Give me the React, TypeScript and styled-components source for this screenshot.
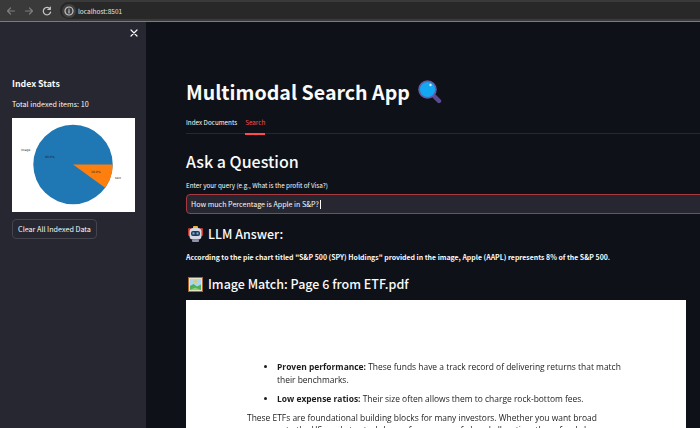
import React from "react";
import styled, { createGlobalStyle } from "styled-components";

const Global = createGlobalStyle`
  html, body { margin: 0; padding: 0; background: #0e1117; }
  * { box-sizing: border-box; }
`;
const Page = styled.div`
  width: 700px; height: 428px; overflow: hidden; display: flex; flex-direction: column;
  font-family: "Noto Sans CJK SC", "Noto Sans", sans-serif; color: #fafafa; background: #0e1117;
`;
const Chrome = styled.div`
  height: 22px; flex: none; display: flex; align-items: center; background: #3a3a3a;
  border-bottom: 1px solid #cf5a4c; padding-left: 6px; gap: 8px;
`;
const NavIcon = styled.svg<{ $dim?: boolean }>`
  width: 10px; height: 10px; flex: none; fill: none; stroke-width: 1.2; stroke-linecap: round; stroke-linejoin: round;
  stroke: ${p => (p.$dim ? "#7c7c7c" : "#c7c7c7")};
`;
const Omnibox = styled.div`
  flex: 1; height: 17px; background: #282828; border-radius: 9px 0 0 9px;
  display: flex; align-items: center; padding-left: 2px; gap: 2px; font-size: 6.5px; color: #e2e2e2;
`;
const SiteInfo = styled.span`
  width: 14px; height: 14px; border-radius: 50%; background: #3f3f3f; display: flex; align-items: center; justify-content: center; flex: none;
`;
const Body = styled.div`flex: 1; display: flex; min-height: 0;`;
const Sidebar = styled.aside`
  width: 146px; flex: none; background: #262730; padding: 5px 11px 0 12px; display: flex; flex-direction: column;
`;
const CloseRow = styled.div`display: flex; justify-content: flex-end; height: 50px; padding-top: 1px; margin-right: -4px;`;
const CloseIcon = styled(NavIcon)`stroke: #fafafa;`;
const SideTitle = styled.div`font-size: 8.8px; font-weight: 700; line-height: 14px; margin-bottom: 7px; white-space: nowrap;`;
const SideText = styled.div`font-size: 7.2px; line-height: 12px; margin-bottom: 8px; white-space: nowrap;`;
const Chart = styled.svg`width: 123px; height: 94px; display: block; background: #fff; flex: none;`;
const ClearButton = styled.button`
  margin-top: 7px; width: 85px; height: 20px; padding: 0; background: #262730; color: #fafafa;
  border: 1px solid #43444e; border-radius: 4px; font: 400 7.2px "Noto Sans CJK SC", sans-serif; white-space: nowrap;
`;
const Main = styled.main`
  flex: 1; min-width: 0; padding: 54px 0 0 40px; overflow: hidden; display: flex; flex-direction: column;
`;
const Title = styled.h1`
  margin: 0; font-size: 19.6px; font-weight: 700; line-height: 32px; height: 32px; display: flex; align-items: center; gap: 8px; white-space: nowrap;
`;
const Tabs = styled.div`
  margin-top: 6px; height: 20px; display: flex; gap: 8px; border-bottom: 1px solid #262730; flex: none;
`;
const Tab = styled.div<{ $active?: boolean }>`
  font-size: 6.3px; line-height: 18px; height: 21px; white-space: nowrap;
  color: ${p => (p.$active ? "#ff4b4b" : "#fafafa")};
  border-bottom: ${p => (p.$active ? "2px solid #ff4b4b" : "none")};
`;
const Heading = styled.h2`margin: 14px 0 0; font-size: 16px; font-weight: 500; line-height: 26px; white-space: nowrap;`;
const FieldLabel = styled.label`display: block; margin-top: 6px; font-size: 6.3px; line-height: 12px; white-space: nowrap;`;
const QueryBox = styled.div`
  margin-top: 2px; width: 540px; height: 20px; flex: none; background: #262730; border: 1px solid #a8393f; border-radius: 4px;
  padding-left: 4px; font-size: 7.1px; line-height: 18px; white-space: nowrap; display: flex; align-items: center;
`;
const Caret = styled.span`width: 1px; height: 9px; background: #fafafa; margin-left: 1px; flex: none;`;
const SubHeading = styled.h3`
  margin: 0; font-size: 12.5px; font-weight: 500; line-height: 20px; display: flex; align-items: center; gap: 5px; white-space: nowrap;
`;
const AnswerHeading = styled(SubHeading)`margin-top: 10px; padding-left: 2px;`;
const MatchHeading = styled(SubHeading)`margin-top: 11px; padding-left: 2px;`;
const Answer = styled.p`margin: 7px 0 0; font-size: 6.95px; font-weight: 700; line-height: 12px; white-space: nowrap;`;
const Doc = styled.div`
  margin-top: 6px; width: 500px; flex: 1; background: #fff; color: #1c1c1c; overflow: hidden;
  padding: 61px 0 0 61px; font-family: "Open Sans", sans-serif; font-size: 8.45px; line-height: 12.5px; filter: blur(0.25px);
`;
const DocList = styled.ul`margin: 0 0 6.5px; padding: 0 0 0 30px;`;
const DocItem = styled.li`margin-bottom: 6.5px; width: 350px;`;
const DocPara = styled.p`margin: 0; width: 365px;`;

const Robot = () => (
  <svg width="15" height="16" viewBox="0 0 15 16">
    <rect x="0" y="2" width="3" height="8" rx="1" fill="#c8352e" />
    <rect x="12" y="2" width="3" height="8" rx="1" fill="#c8352e" />
    <rect x="5" y="0" width="5" height="3" rx="1" fill="#f0b03c" />
    <rect x="1.5" y="2" width="12" height="11.5" rx="3.5" fill="#d5d8e2" />
    <rect x="3" y="5" width="9" height="5" rx="2" fill="#2d3350" />
    <rect x="4.5" y="6.4" width="2" height="2" fill="#58c4f0" />
    <rect x="8.5" y="6.4" width="2" height="2" fill="#58c4f0" />
    <rect x="4" y="13.5" width="7" height="2.5" rx="1" fill="#8e93a8" />
  </svg>
);
const Picture = () => (
  <svg width="15" height="15" viewBox="0 0 15 15">
    <rect width="15" height="15" fill="#b0622a" />
    <rect x="1" y="1" width="13" height="13" fill="#e8e2c8" />
    <rect x="2" y="2" width="11" height="11" fill="#a5d8f0" />
    <circle cx="7.5" cy="4.5" r="1.6" fill="#f5c542" />
    <path d="M2 9 L5.5 7 L9 9.5 L13 7.5 V13 H2Z" fill="#4fae5c" />
    <path d="M2 13 L7 10.5 L13 13Z" fill="#8fd06a" />
  </svg>
);
const Magnifier = () => (
  <svg width="24" height="24" viewBox="0 0 24 24">
    <path d="M15 15 L21 21" stroke="#5b4a92" strokeWidth="4.4" strokeLinecap="round" />
    <circle cx="9.5" cy="9.5" r="9.3" fill="#6a5aa5" />
    <circle cx="9.5" cy="9.5" r="7.6" fill="#12a8f2" />
    <circle cx="12.5" cy="5" r="1.2" fill="#d5f2ff" />
  </svg>
);

export default function App() {
  return (
    <Page>
      <Global />
      <Chrome>
        <NavIcon $dim viewBox="0 0 10 10"><path d="M8.5 5H1.5M4.5 2L1.5 5L4.5 8" /></NavIcon>
        <NavIcon $dim viewBox="0 0 10 10"><path d="M1.5 5H8.5M5.5 2L8.5 5L5.5 8" /></NavIcon>
        <NavIcon viewBox="0 0 10 10"><path d="M8 3A3.7 3.7 0 1 0 8.6 6M8.3 1V3.4H5.9" /></NavIcon>
        <Omnibox>
          <SiteInfo>
            <NavIcon viewBox="0 0 10 10"><circle cx="5" cy="5" r="4" /><path d="M5 4.6V7M5 3V3.2" /></NavIcon>
          </SiteInfo>
          localhost:8501
        </Omnibox>
      </Chrome>
      <Body>
        <Sidebar>
          <CloseRow>
            <CloseIcon viewBox="0 0 10 10"><path d="M2 2L8 8M8 2L2 8" /></CloseIcon>
          </CloseRow>
          <SideTitle>Index Stats</SideTitle>
          <SideText>Total indexed items: 10</SideText>
          <Chart viewBox="0 0 123 94">
            <circle cx="61" cy="46.5" r="39.7" fill="#1f77b4" />
            <path d="M61 46.5 H100.7 A39.7 39.7 0 0 1 93.1 69.8 Z" fill="#ff7f0e" />
            <text x="9" y="33" fontSize="3" fill="#222" fontFamily="DejaVu Sans">image</text>
            <text x="33" y="40" fontSize="3" fill="#222" fontFamily="DejaVu Sans">90.0%</text>
            <text x="79" y="55" fontSize="3" fill="#222" fontFamily="DejaVu Sans">10.0%</text>
            <text x="103" y="61" fontSize="3" fill="#222" fontFamily="DejaVu Sans">text</text>
          </Chart>
          <ClearButton>Clear All Indexed Data</ClearButton>
        </Sidebar>
        <Main>
          <Title>Multimodal Search App <Magnifier /></Title>
          <Tabs>
            <Tab>Index Documents</Tab>
            <Tab $active>Search</Tab>
          </Tabs>
          <Heading>Ask a Question</Heading>
          <FieldLabel>Enter your query (e.g., What is the profit of Visa?)</FieldLabel>
          <QueryBox>How much Percentage is Apple in S&amp;P?<Caret /></QueryBox>
          <AnswerHeading><Robot /> LLM Answer:</AnswerHeading>
          <Answer>According to the pie chart titled "S&amp;P 500 (SPY) Holdings" provided in the image, Apple (AAPL) represents 8% of the S&amp;P 500.</Answer>
          <MatchHeading><Picture /> Image Match: Page 6 from ETF.pdf</MatchHeading>
          <Doc>
            <DocList>
              <DocItem><b>Proven performance:</b> These funds have a track record of delivering returns that match their benchmarks.</DocItem>
              <DocItem><b>Low expense ratios:</b> Their size often allows them to charge rock-bottom fees.</DocItem>
            </DocList>
            <DocPara>These ETFs are foundational building blocks for many investors. Whether you want broad exposure to the US market, a tech-heavy focus, or a safe bond allocation, these funds have you</DocPara>
          </Doc>
        </Main>
      </Body>
    </Page>
  );
}
